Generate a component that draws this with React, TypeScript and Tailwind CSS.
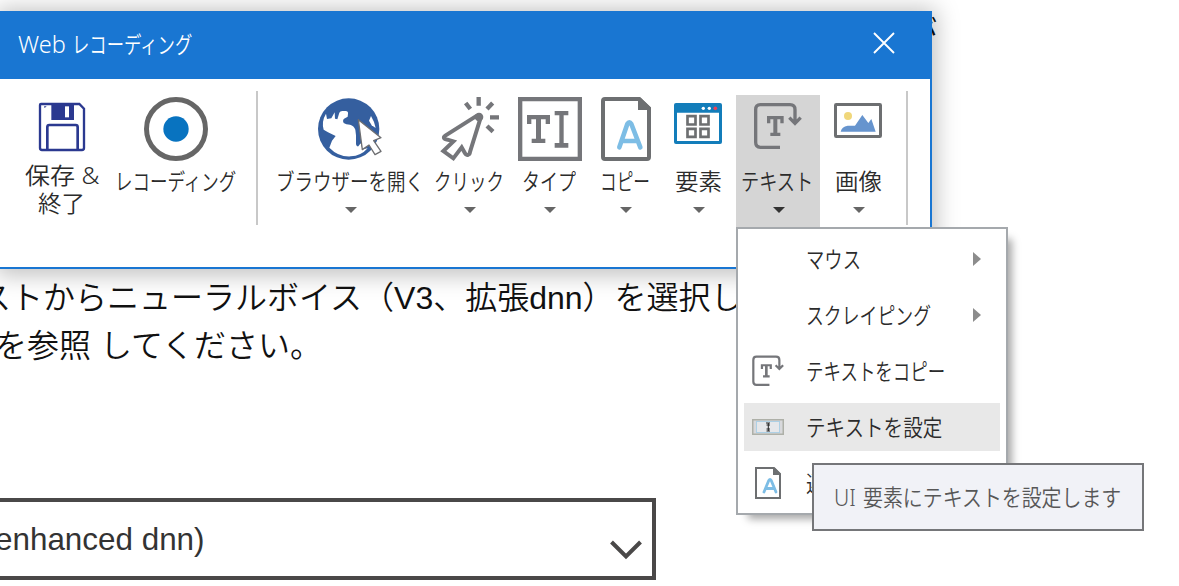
import React, { useLayoutEffect, useRef, useState } from 'react';
import clsx from 'clsx';

interface FitTextProps {
  text: string;
  width: number;
  className?: string;
}

// Condenses a single line of text to the given width
const FitText: React.FC<FitTextProps> = ({ text, width, className }) => {
  const ref = useRef<HTMLSpanElement>(null);
  const [scale, setScale] = useState(1);

  useLayoutEffect(() => {
    if (ref.current) setScale(width / ref.current.offsetWidth);
  }, [text, width]);

  return (
    <span className={clsx('block whitespace-nowrap', className)} style={{ width }}>
      <span ref={ref} className="inline-block origin-left" style={{ transform: `scaleX(${scale})` }}>
        {text}
      </span>
    </span>
  );
};

interface IconProps {
  viewBox: string;
  children: React.ReactNode;
}

const Icon: React.FC<IconProps> = ({ viewBox, children }) => (
  <svg viewBox={viewBox} className="block size-16 shrink-0 overflow-visible" fill="none">
    {children}
  </svg>
);

const SaveIcon = () => (
  <Icon viewBox="90 291 192 192">
    <path d="M123 312H238L252 326V444Q252 450 246 450H126Q120 450 120 444V315Q120 312 123 312Z" stroke="#2b3990" strokeWidth="7" />
    <path d="M154 312H222V360H154Z" fill="#2b3990" />
    <path d="M195 319H207V352H195Z" fill="#fff" />
    <path d="M142 450V381Q142 375 148 375H227Q233 375 233 381V450" stroke="#2b3990" strokeWidth="8" />
    <path d="M132 319H140L134 324Z" fill="#2b3990" />
  </Icon>
);

const RecordIcon = () => (
  <Icon viewBox="432 291 192 192">
    <circle cx="528" cy="387" r="88.5" stroke="#666" strokeWidth="15" />
    <circle cx="528" cy="387" r="38" fill="#0873c0" />
  </Icon>
);

const BrowserIcon = () => (
  <Icon viewBox="207 51 192 192">
    <circle cx="296" cy="147" r="92" fill="#355f9f" />
    <path
      d="M228 101L231 117L244 115L254 97L255 116L262 118L268 98Q270 93 277 93H287Q295 94 294 101L293 110L281 117Q277 123 281 129Q288 134 300 134Q312 137 316 149L318 166V193Q319 200 325 199L332 190L338 208L353 205Q333 228 302 229Q265 231 238 203L246 182L257 168L234 157L221 149Q214 124 228 101Z"
      fill="#fff"
    />
    <path d="M357 122L363 108Q373 124 377 144L365 136Z" fill="#fff" />
    <path d="M325 119L393 173L371 182L393 214L375 224L357 195L337 209Z" fill="#fff" stroke="#6d6e71" strokeWidth="4" strokeLinejoin="round" />
  </Icon>
);

const ClickIcon = () => (
  <Icon viewBox="564 51 192 192">
    <g stroke="#75767a" strokeWidth="12">
      <path
        d="M682 106L586 167Q579 172 583 176Q585 178 593 179L610 184L580 213L610 235L635 202L645 220Q649 227 655 224Q659 223 660 216L692 113"
        strokeLinejoin="miter"
      />
      <path d="M686 51V77M647 69L661 87M728 69L711 87M720 112H747M711 138L729 155" strokeWidth="13" />
    </g>
    <circle cx="687" cy="111" r="13" fill="#75767a" />
  </Icon>
);

const TypeIcon = () => (
  <Icon viewBox="54 51 192 192">
    <path d="M60.5 57.5H239.5V236.5H60.5Z" stroke="#75767a" strokeWidth="13" />
    <path
      d="M81 105H150V132H137V118H123V176H136V189H95V176H108V118H94V132H81ZM164 93H205V106H191V189H205V203H164V189H178V106H164Z"
      fill="#75767a"
    />
  </Icon>
);

const CopyIcon = () => (
  <Icon viewBox="282 51 192 192">
    <path d="M315 57H418L447 85V231Q447 237 441 237H315Q309 237 309 231V63Q309 57 315 57Z" stroke="#6d6f71" strokeWidth="12" />
    <path d="M414 54H422L452 82V90H414Z" fill="#6d6f71" />
    <path
      d="M358 202L382 132Q388 122 394 132L421 202M367 183H411"
      stroke="#7dbde5"
      strokeWidth="14"
      strokeLinecap="round"
      strokeLinejoin="round"
    />
  </Icon>
);

const ElementIcon = () => (
  <Icon viewBox="501 51 192 192">
    <rect x="522" y="69" width="144" height="123" rx="6" fill="#137dba" />
    <path d="M531 98H657V183H531Z" fill="#fff" />
    <circle cx="610" cy="85" r="5" fill="#fff" />
    <circle cx="628" cy="85" r="5" fill="#fff" />
    <circle cx="646" cy="85" r="5.5" fill="#ef4056" />
    <path d="M562.5 108.5H586.5V133.5H562.5ZM601.5 108.5H625.5V133.5H601.5ZM562.5 146.5H586.5V170.5H562.5ZM601.5 146.5H625.5V170.5H601.5Z" stroke="#6d6f71" strokeWidth="8" />
  </Icon>
);

const TextShape = () => (
  <>
    <path d="M180 202H121Q107 202 107 187V89Q107 74 121 74H210Q225 74 225 89V130M208 113L225 130L242 113" stroke="#75767a" strokeWidth="10" />
    <path d="M141 108H191V130H181V118H172V158H181V168H151V158H160V118H151V130H141Z" fill="#75767a" />
  </>
);

const TextIcon = () => (
  <Icon viewBox="78 51 192 192">
    <TextShape />
  </Icon>
);

const ImageIcon = () => (
  <Icon viewBox="321 51 192 192">
    <rect x="346.5" y="73.5" width="135" height="96" rx="2" fill="#fff" stroke="#6d6f71" strokeWidth="9" />
    <circle cx="384" cy="108" r="12" fill="#f0d77b" />
    <path d="M362 155Q365 140 383 137H405L427 105L445 129L454 117L467 155Z" fill="#6694ce" />
  </Icon>
);

const TextSmallIcon = () => (
  <svg viewBox="101 67 145 144" className="size-8" fill="none">
    <TextShape />
  </svg>
);

const SetTextIcon = () => (
  <svg viewBox="0 0 32 18" className="h-[18px] w-8" fill="none">
    <rect x=".75" y="1.75" width="30.5" height="14.5" fill="#d8d9dc" stroke="#aeb0a8" strokeWidth="1.5" />
    <rect x="4.5" y="3.5" width="23" height="11" fill="#e6e7ea" stroke="#7cc0e6" strokeDasharray="1 1" />
    <path d="M14 5H16.5L18 5M14.5 13H18M16.3 5V13M14.5 7L18 7M14.5 11H18" stroke="#222" />
  </svg>
);

const CopySmallIcon = () => (
  <svg viewBox="0 0 32 32" className="size-8" fill="none">
    <path d="M4 1H22L28 7V31H4Z" stroke="#6d6f71" strokeWidth="2" />
    <path d="M21 1H23L29 7V8H21Z" fill="#6d6f71" />
    <path d="M12 25L16.8 13.5Q18 11.5 19.2 13.5L24 25M13.5 21.5H22.5" stroke="#7dbde5" strokeWidth="2.8" strokeLinecap="round" />
  </svg>
);

interface ToolProps {
  label: string;
  labelWidth: number;
  icon: React.ReactNode;
  width: string;
  active?: boolean;
}

const Tool: React.FC<ToolProps> = ({ label, labelWidth, icon, width, active }) => (
  <button className={clsx('flex h-[132px] shrink-0 flex-col items-center pt-0.5', width, active && 'bg-[#d5d5d5]')}>
    {icon}
    <FitText text={label} width={labelWidth} className="mt-1.5 mr-0.5 text-left leading-7" />
    <svg viewBox="0 0 12 6" className={clsx('mt-3 h-1.5 w-3 shrink-0', active && 'ml-0.5')}>
      <path d="M0 0H12L6 6Z" fill={active ? '#333' : '#666'} />
    </svg>
  </button>
);

const tools: ToolProps[] = [
  { label: 'ブラウザーを開く', labelWidth: 148, icon: <BrowserIcon />, width: 'w-[158px]' },
  { label: 'クリック', labelWidth: 70, icon: <ClickIcon />, width: 'w-20' },
  { label: 'タイプ', labelWidth: 54, icon: <TypeIcon />, width: 'w-20' },
  { label: 'コピー', labelWidth: 50, icon: <CopyIcon />, width: 'w-[72px]' },
  { label: '要素', labelWidth: 47, icon: <ElementIcon />, width: 'w-[74px]' },
  { label: 'テキスト', labelWidth: 72, icon: <TextIcon />, width: 'w-[84px]', active: true },
  { label: '画像', labelWidth: 47, icon: <ImageIcon />, width: 'w-[78px]' },
];

const menu = [
  { label: 'マウス', width: 55, submenu: true },
  { label: 'スクレイピング', width: 125, submenu: true },
  { label: 'テキストをコピー', width: 139, icon: <TextSmallIcon /> },
  { label: 'テキストを設定', width: 136, icon: <SetTextIcon />, active: true },
  { label: '選択したテキスト', width: 162, icon: <CopySmallIcon /> },
];

const Divider = () => <div className="-mt-1 h-[134px] w-0.5 shrink-0 bg-[#c8c8c8]" />;

const RecorderWindow = () => (
  <section className="absolute top-[11px] left-0 h-[258px] w-[932px] border-r-2 border-b-2 border-[#1976d2] bg-white shadow-[0_2px_22px_4px_rgba(0,0,0,0.25)]">
    <header className="-mr-0.5 flex h-[68px] items-center bg-[#1976d2] pb-0.5 pl-[18px] text-[23px] text-white">
      <FitText text="Web" width={48} />
      <FitText text="レコーディング" width={120} className="ml-1.5" />
      <svg viewBox="0 0 22 22" className="mt-[-3px] mr-[37px] ml-auto size-[22px]" fill="none">
        <path d="M1 1L21 21M21 1L1 21" stroke="#fff" strokeWidth="1.9" />
      </svg>
    </header>
    <div className="flex items-start pt-4 text-[23px] text-[#2b2b2b]">
      <button className="ml-[18px] flex w-[88px] flex-col items-center pt-0.5">
        <SaveIcon />
        <FitText text="保存 &amp;" width={74} className="text-left leading-7" />
        <FitText text="終了" width={47} className="mr-0.5 text-left leading-7" />
      </button>
      <button className="mr-[13px] ml-[3px] flex w-[134px] flex-col items-center pt-0.5">
        <RecordIcon />
        <FitText text="レコーディング" width={121} className="mt-1.5 mr-0.5 text-left leading-7" />
      </button>
      <Divider />
      <div className="ml-3.5 flex">
        {tools.map((tool) => (
          <Tool key={tool.label} {...tool} />
        ))}
      </div>
      <div className="ml-2">
        <Divider />
      </div>
    </div>
  </section>
);

const Menu = () => (
  <ul className="absolute top-[227px] left-[736px] flex h-[288px] w-[272px] flex-col gap-2 border-2 border-[#a5a9ad] bg-white p-1.5 text-[23px] text-[#2b2b2b] shadow-[8px_8px_8px_-4px_rgba(0,0,0,0.35)]">
    {menu.map((item) => (
      <li key={item.label} className={clsx('flex h-12 shrink-0 items-center pl-2', item.active && 'bg-[#e8e8e8]')}>
        <div className="mr-[22px] flex w-8 shrink-0 justify-center">{item.icon}</div>
        <FitText text={item.label} width={item.width} />
        {item.submenu && (
          <svg viewBox="0 0 8 14" className="mr-[19px] ml-auto h-3.5 w-2">
            <path d="M0 0L8 7L0 14Z" fill="#8c8c8c" />
          </svg>
        )}
      </li>
    ))}
  </ul>
);

const App: React.FC = () => {
  return (
    <div className="relative h-[586px] w-[1179px] overflow-hidden bg-white font-['Noto_Sans','Noto_Sans_CJK_JP',sans-serif] font-[350]">
      <main className="flex h-full flex-col font-['Liberation_Sans','Noto_Sans_CJK_JP',sans-serif] text-[32px] whitespace-nowrap text-[#111]">
        <p className="ml-[905px] pt-[9px] leading-[48px]">が</p>
        <p className="-ml-[21px] pt-[217px] leading-[48px]">ストからニューラルボイス（V3、拡張dnn）を選択し</p>
        <p className="-ml-[5px] leading-[48px]">を参照 してください。</p>
        <div className="mt-32 -ml-1 flex h-[82px] w-[660px] items-center border-4 border-[#4a4848] text-[#333]">
          <FitText text="enhanced dnn)" width={210} className="-ml-[5px]" />
          <svg viewBox="0 0 32 20" className="mt-[21px] mr-2.5 ml-auto h-5 w-8" fill="none">
            <path d="M1.5 2L16 16.5L30.5 2" stroke="#4a4848" strokeWidth="4" />
          </svg>
        </div>
      </main>
      <RecorderWindow />
      <Menu />
      <div className="absolute top-[463px] left-[812px] flex h-[68px] w-[332px] items-center border-2 border-[#757679] bg-[#f1f2f7] pl-5 text-[23px] text-[#575757]">
        <FitText text="UI" width={22} />
        <FitText text="要素にテキストを設定します" width={258} className="ml-[7px]" />
      </div>
    </div>
  );
};

export default App;
